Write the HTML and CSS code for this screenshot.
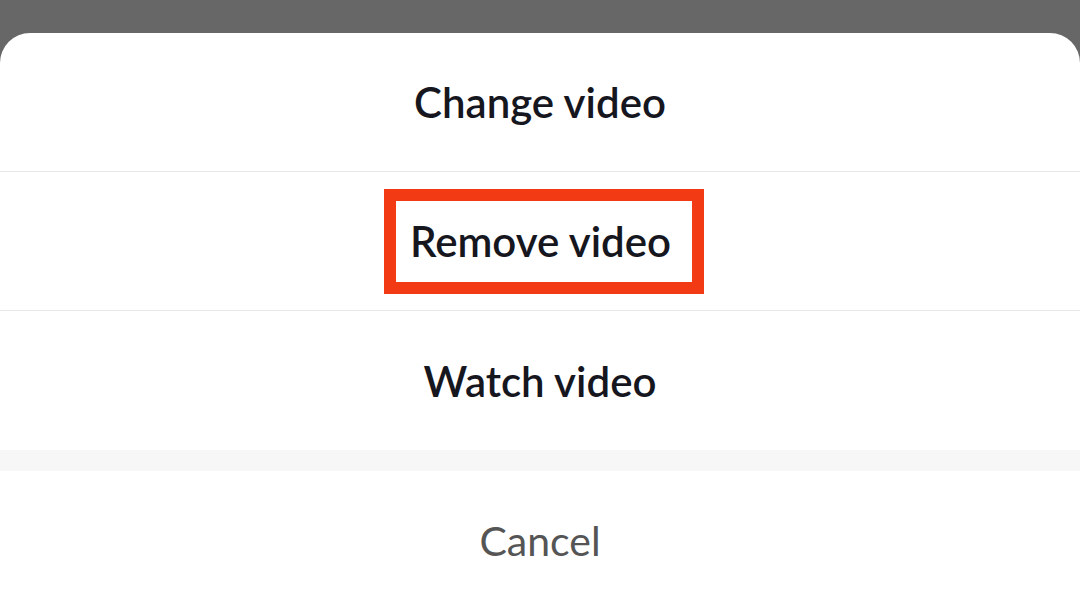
FILE: index.html
```html
<!DOCTYPE html>
<html>
<head>
<meta charset="utf-8">
<link rel="stylesheet" href="styles.css">
</head>
<body>
<div class="backdrop"></div>
<div class="sheet">
  <div class="group">
    <div class="row">Change video</div>
    <div class="row"><span class="highlight">Remove video</span></div>
    <div class="row">Watch video</div>
  </div>
  <div class="gap"></div>
  <div class="row cancel">Cancel</div>
</div>
</body>
</html>
```
FILE: styles.css
```css
html, body {
  margin: 0;
  padding: 0;
}
body {
  width: 1080px;
  height: 610px;
  overflow: hidden;
  background: #676767;
  font-family: "Lato", "Open Sans", sans-serif;
}
.backdrop {
  height: 33px;
  background: #676767;
}
.sheet {
  background: #ffffff;
  border-radius: 30px 30px 0 0;
  height: 577px;
  display: flex;
  flex-direction: column;
}
.group {
  display: flex;
  flex-direction: column;
}
.row {
  height: 138px;
  display: flex;
  align-items: center;
  justify-content: center;
  font-size: 42px;
  font-weight: 600;
  color: #16161e;
  border-bottom: 1px solid #e8e8e8;
}
.group .row:last-child {
  border-bottom: none;
  height: 139px;
}
.gap {
  height: 21px;
  background: #f7f7f7;
}
.cancel {
  border-bottom: none;
  font-weight: 400;
  color: #555555;
  font-size: 41px;
}
.highlight {
  display: inline-block;
  border: 12px solid #f23a14;
  padding: 0 21px 0 14px;
  height: 81px;
  line-height: 81px;
  margin-left: 8px;
}
```
